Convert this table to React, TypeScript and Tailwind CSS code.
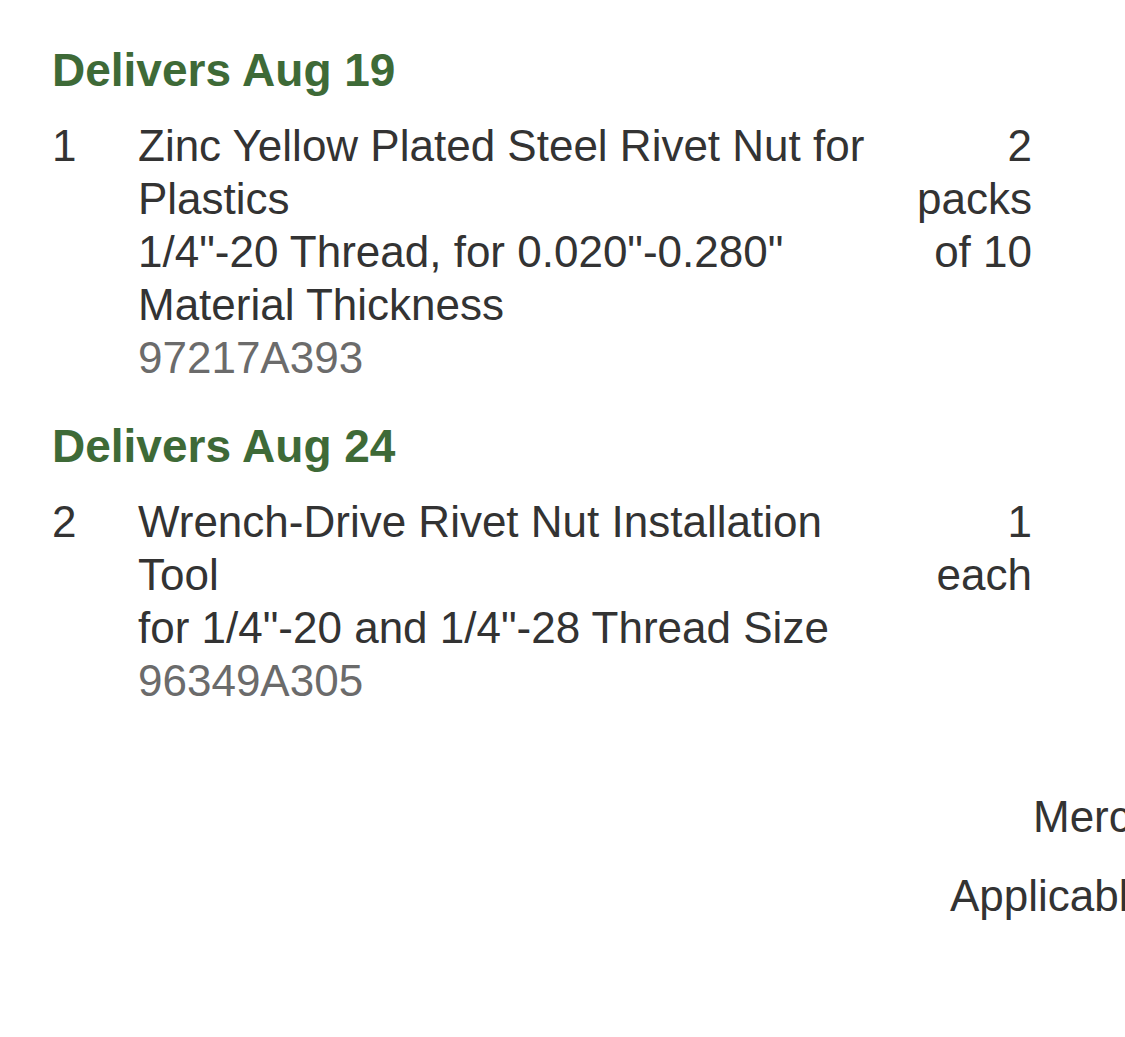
const items = [
  {
    date: 'Delivers Aug 19',
    line: 1,
    name: 'Zinc Yellow Plated Steel Rivet Nut for Plastics',
    detail: '1/4"-20 Thread, for 0.020"-0.280" Material Thickness',
    part: '97217A393',
    qty: ['2', 'packs', 'of 10'],
  },
  {
    date: 'Delivers Aug 24',
    line: 2,
    name: 'Wrench-Drive Rivet Nut Installation Tool',
    detail: 'for 1/4"-20 and 1/4"-28 Thread Size',
    part: '96349A305',
    qty: ['1', 'each'],
  },
];

export default function App() {
  return (
    <div
      className="w-[1125px] h-[1037px] overflow-hidden bg-white text-[#333333] text-[44px] leading-[53px]"
      style={{ fontFamily: '"Liberation Sans", Arial, Helvetica, sans-serif' }}
    >
      <div className="pl-[52px] pt-[44px]">
        {items.map((it, i) => (
          <div key={it.line} className={i > 0 ? 'mt-[36px]' : ''}>
            <h2 className="font-bold text-[46px] text-[#3e6a37]">{it.date}</h2>
            <div className="mt-[22px] grid grid-cols-[86px_750px_144px]">
              <div>{it.line}</div>
              <div>
                <div>{it.name}</div>
                <div>{it.detail}</div>
                <div className="text-[#6b6b6b]">{it.part}</div>
              </div>
              <div className="text-right">
                {it.qty.map((q) => (
                  <div key={q}>{q}</div>
                ))}
              </div>
            </div>
          </div>
        ))}
      </div>

      {/* order totals, cut off at the right edge */}
      <div className="mt-[83px] whitespace-nowrap">
        <div className="pl-[1033px]">Merchandise</div>
        <div className="mt-[26px] pl-[950px]">Applicable sales tax</div>
      </div>
    </div>
  );
}
